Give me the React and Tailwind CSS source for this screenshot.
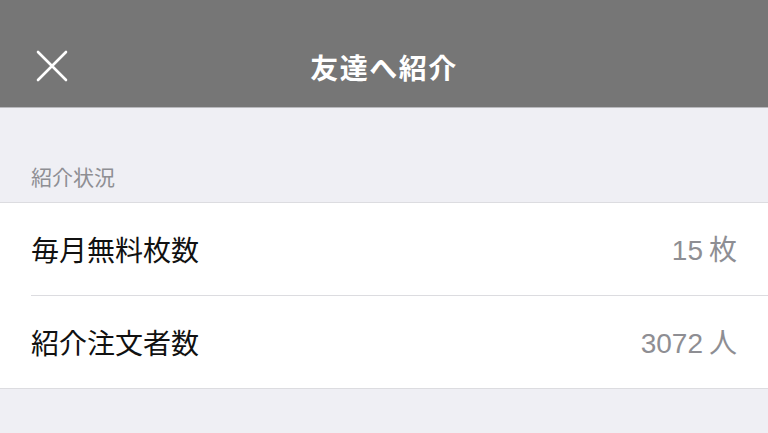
import React from 'react';

const font = { fontFamily: '"Noto Sans CJK JP", "Noto Sans", sans-serif' };
const valueFont = { fontFamily: '"Liberation Sans", "Noto Sans CJK JP", sans-serif' };

const rows = [
  { label: '毎月無料枚数', value: '15', unit: '枚' },
  { label: '紹介注文者数', value: '3072', unit: '人' },
];

const App = () => {
  return (
    <div className="w-[768px] h-[433px] bg-[#efeff4] overflow-hidden" style={font}>
      {/* Header */}
      <div className="relative h-[108px] bg-[#767676] border-b border-[#b9b9bd] flex items-center justify-center pt-[26px]">
        <button className="absolute left-[36px] top-[50px] w-[32px] h-[32px]">
          <svg viewBox="0 0 32 32" className="w-full h-full" fill="none" stroke="white" strokeWidth="2.6" strokeLinecap="round">
            <path d="M2 2L30 30M30 2L2 30" />
          </svg>
        </button>
        <h1 className="text-[28px] font-bold text-white tracking-[1.5px]">友達へ紹介</h1>
      </div>

      {/* Section */}
      <div className="pt-[52px] pb-[9px] px-[31px]">
        <p className="text-[21px] text-[#8e8e93] leading-[33px]">紹介状況</p>
      </div>

      <div className="bg-white border-t border-b border-[#dcdce0]">
        {rows.map((row, i) => (
          <div key={row.label} className="pl-[31px]">
            <div className={`flex items-center justify-between pr-[31px] ${i < rows.length - 1 ? 'h-[93px] border-b border-[#dcdce0]' : 'h-[92px]'}`}>
              <span className="text-[28px] text-[#111]">{row.label}</span>
              <span className="text-[28px] text-[#8e8e93]" style={valueFont}>
                {row.value}<span className="ml-[6px]" style={font}>{row.unit}</span>
              </span>
            </div>
          </div>
        ))}
      </div>
    </div>
  );
};

export default App;
